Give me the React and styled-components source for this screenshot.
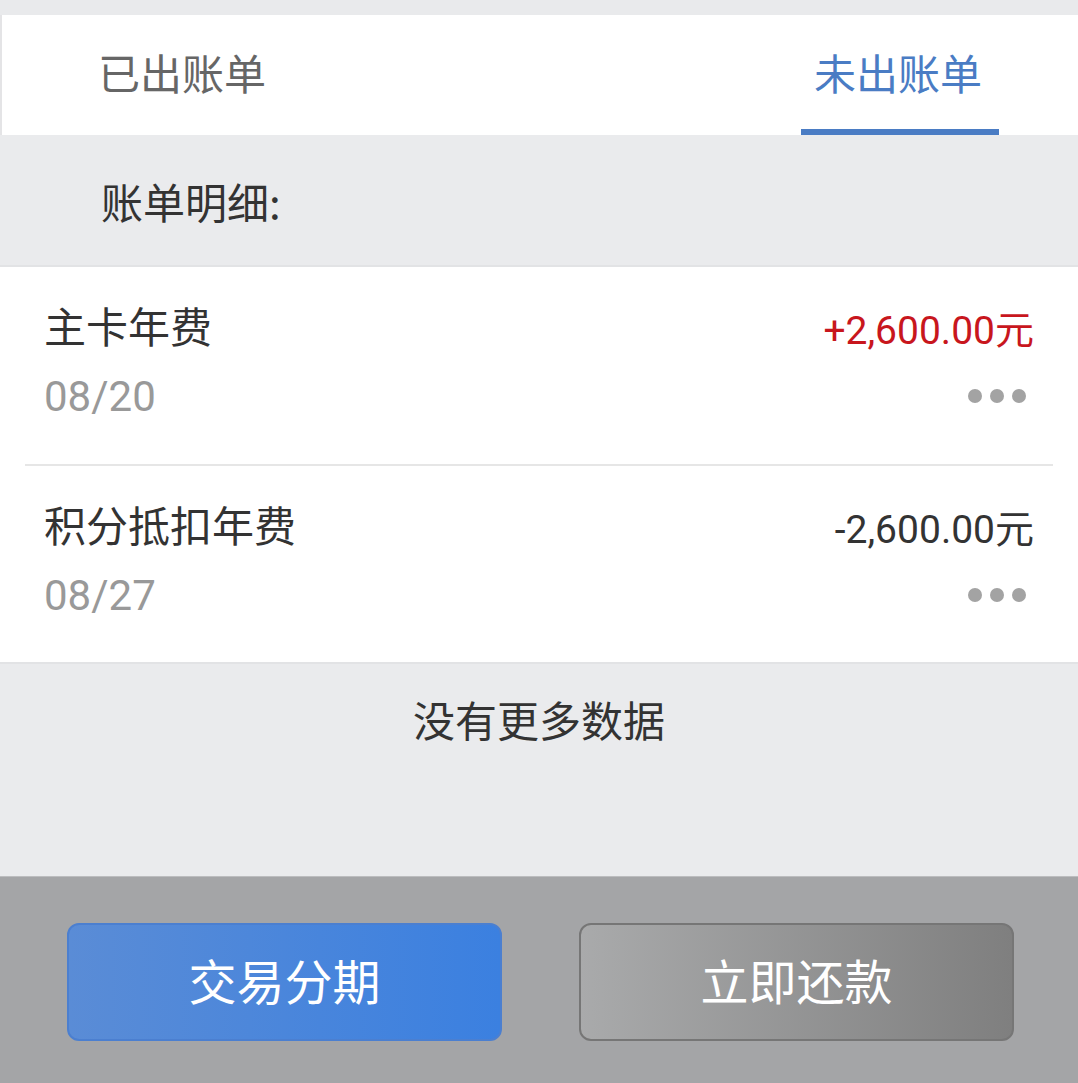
import React, { useState } from "react";
import styled, { createGlobalStyle } from "styled-components";

const GlobalStyle = createGlobalStyle`
  html, body {
    margin: 0;
    padding: 0;
    background: #e9eaec;
  }
  body {
    font-family: Roboto, "Noto Sans CJK SC", "Noto Sans", sans-serif;
  }
`;

const Page = styled.div`
  width: 1078px;
  height: 1083px;
  display: flex;
  flex-direction: column;
  background: #eaebed;
  overflow: hidden;
`;

const TopStrip = styled.div`
  height: 15px;
  background: #e9eaec;
`;

const TabBar = styled.div`
  height: 120px;
  display: flex;
  justify-content: space-between;
  background: #fff;
  border-left: 2px solid #e4e4e6;
`;

const Tab = styled.button`
  width: 360px;
  border: none;
  background: none;
  padding: 0 0 8px;
  position: relative;
  display: flex;
  align-items: center;
  justify-content: center;
  font-family: "Noto Sans CJK SC", sans-serif;
  font-size: 42px;
  color: ${(p) => (p.$active ? "#4a7cc4" : "#666")};

  &::after {
    content: "";
    display: ${(p) => (p.$active ? "block" : "none")};
    position: absolute;
    bottom: 0;
    left: 83px;
    width: 198px;
    height: 6px;
    background: #4a7cc4;
  }
`;

const SectionTitle = styled.div`
  height: 130px;
  display: flex;
  align-items: center;
  padding-left: 101px;
  font-family: "Noto Sans CJK SC", sans-serif;
  font-size: 42px;
  color: #333;
  border-bottom: 2px solid #e2e3e5;
`;

const List = styled.div`
  background: #fff;
  border-bottom: 2px solid #e2e3e5;
`;

const Row = styled.div`
  height: ${(p) => p.$h}px;
  margin: 0 25px;
  padding: 33px 19px 0;
  box-sizing: border-box;
  display: flex;
  flex-direction: column;
  gap: 24px;
  border-bottom: ${(p) => (p.$last ? "none" : "2px solid #e6e6e6")};
`;

const Line = styled.div`
  display: flex;
  justify-content: space-between;
  align-items: center;
  height: 48px;
`;

const Title = styled.span`
  font-family: "Noto Sans CJK SC", sans-serif;
  font-size: 42px;
  color: #333;
`;

const Amount = styled.span`
  font-family: Roboto, "Noto Sans CJK SC", sans-serif;
  font-size: 39px;
  margin-top: 6px;
  color: ${(p) => (p.$positive ? "#c8161d" : "#333")};
`;

const DateText = styled.span`
  font-family: Roboto, sans-serif;
  font-size: 42px;
  color: #999;
`;

const Dots = styled.div`
  display: flex;
  gap: 8px;
  margin-right: 8px;
`;

const Dot = styled.span`
  width: 14px;
  height: 14px;
  border-radius: 50%;
  background: #a3a3a3;
`;

const NoMore = styled.div`
  height: 108px;
  display: flex;
  align-items: center;
  justify-content: center;
  font-family: "Noto Sans CJK SC", sans-serif;
  font-size: 42px;
  color: #333;
`;

const Spacer = styled.div`
  flex: 1;
`;

const Footer = styled.div`
  height: 207px;
  background: #a4a5a7;
  border-top: 1px solid #bcbdbf;
  display: flex;
  align-items: center;
  justify-content: space-between;
  padding: 0 64px 0 67px;
  box-sizing: border-box;
`;

const ActionButton = styled.button`
  width: 435px;
  height: 118px;
  margin-top: 4px;
  padding: 0 0 6px;
  border-radius: 12px;
  font-family: "Noto Sans CJK SC", sans-serif;
  font-size: 48px;
  color: #fff;
  cursor: pointer;
  border: 2px solid ${(p) => (p.$primary ? "#4b7fd0" : "#767676")};
  background: ${(p) =>
    p.$primary
      ? "linear-gradient(to right, #5a8cd6, #3b80e0)"
      : "linear-gradient(to right, #a9aaab, #7f7f7f)"};
`;

const bills = [
  { id: 1, title: "主卡年费", date: "08/20", amount: "+2,600.00元", positive: true, h: 199 },
  { id: 2, title: "积分抵扣年费", date: "08/27", amount: "-2,600.00元", positive: false, h: 196 },
];

function App() {
  const [active, setActive] = useState("unbilled");

  return (
    <Page>
      <GlobalStyle />
      <TopStrip />
      <TabBar>
        <Tab $active={active === "billed"} onClick={() => setActive("billed")}>
          已出账单
        </Tab>
        <Tab $active={active === "unbilled"} onClick={() => setActive("unbilled")}>
          未出账单
        </Tab>
      </TabBar>
      <SectionTitle>账单明细:</SectionTitle>
      <List>
        {bills.map((b, i) => (
          <Row key={b.id} $h={b.h} $last={i === bills.length - 1}>
            <Line>
              <Title>{b.title}</Title>
              <Amount $positive={b.positive}>{b.amount}</Amount>
            </Line>
            <Line>
              <DateText>{b.date}</DateText>
              <Dots>
                <Dot />
                <Dot />
                <Dot />
              </Dots>
            </Line>
          </Row>
        ))}
      </List>
      <NoMore>没有更多数据</NoMore>
      <Spacer />
      <Footer>
        <ActionButton $primary>交易分期</ActionButton>
        <ActionButton>立即还款</ActionButton>
      </Footer>
    </Page>
  );
}

export default App;
